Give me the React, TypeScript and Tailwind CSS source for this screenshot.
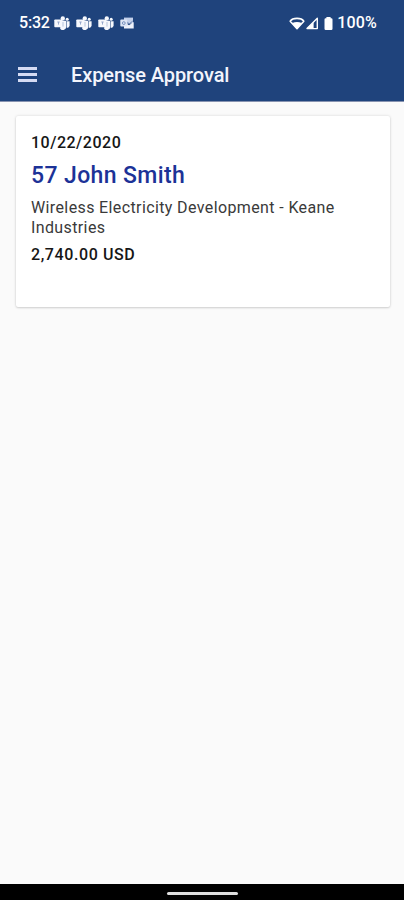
import React from 'react';

interface Expense {
  id: number;
  date: string;
  employee: string;
  project: string;
  amount: string;
}

const expenses: Expense[] = [
  {
    id: 57,
    date: '10/22/2020',
    employee: 'John Smith',
    project: 'Wireless Electricity Development - Keane Industries',
    amount: '2,740.00 USD',
  },
];

const TeamsIcon = () => (
  <svg width="16" height="14" viewBox="0 0 16 14" fill="#f6f8fd">
    <circle cx="8.8" cy="2.4" r="2.2" />
    <circle cx="13.2" cy="3.3" r="1.5" />
    <path d="M7.5 4.8h4.6v5.4a3.3 3.3 0 0 1-6 2.4z" />
    <path d="M12.6 5.3h3v4a2.5 2.5 0 0 1-3 2.4z" />
    <rect x="0.3" y="3.4" width="8.2" height="7.8" rx="0.8" />
    <path d="M3.3 6h2.4M4.5 6v2.6" stroke="#8ea2c8" strokeWidth="0.9" />
    <path d="M9 6v4.6" stroke="#8ea2c8" strokeWidth="0.6" />
  </svg>
);

const OutlookIcon = () => (
  <svg width="14" height="12" viewBox="0 0 14 12">
    <path d="M4 0.6h9v6H4z" fill="#c3d0ea" />
    <path d="M4 5l5 3.2L13.7 5v6.5H4z" fill="#eef2fb" />
    <path d="M6.5 4.5l2.8 2.4 3.4-2.8" stroke="#5b78aa" strokeWidth="0.9" fill="none" />
    <rect x="0.3" y="2.6" width="7" height="7" rx="0.8" fill="#dde5f5" />
    <circle cx="3.8" cy="6.1" r="1.4" stroke="#6d88b8" strokeWidth="0.9" fill="none" />
  </svg>
);

const WifiIcon = () => (
  <svg width="16" height="13" viewBox="0 0 16 13">
    <path d="M1.2 4.2C3.6 0.4 12.4 0.4 14.8 4.2L8 11.6z" fill="none" stroke="#fff" strokeWidth="1.6" strokeLinejoin="round" />
    <path d="M3.4 6c2.6-1.2 6.6-1.2 9.2 0L8 12z" fill="#fff" />
  </svg>
);

const SignalIcon = () => (
  <svg width="14" height="13" viewBox="0 0 14 13">
    <path d="M12.3 1.3v10.3H2z" fill="none" stroke="#fff" strokeWidth="1.4" strokeLinejoin="round" />
    <path d="M8.6 5v6.6H2z" fill="#fff" />
  </svg>
);

const BatteryIcon = () => (
  <svg width="9" height="13" viewBox="0 0 9 13" fill="#fff">
    <path d="M2.4 0h4.2v1.2h.7A1.2 1.2 0 0 1 8.5 2.4v9.4A1.2 1.2 0 0 1 7.3 13H1.7A1.2 1.2 0 0 1 .5 11.8V2.4a1.2 1.2 0 0 1 1.2-1.2h.7z" />
  </svg>
);

const StatusBar = () => (
  <div className="flex h-[46px] items-center justify-between pl-[19px] pr-[27px] text-white">
    <div className="flex items-center">
      <span className="w-[35px] text-base font-medium leading-5 tracking-[-0.2px]">5:32</span>
      <div className="flex items-center gap-[6px]">
        <TeamsIcon />
        <TeamsIcon />
        <TeamsIcon />
        <OutlookIcon />
      </div>
    </div>
    <div className="flex items-center">
      <WifiIcon />
      <SignalIcon />
      <span className="ml-[5px] mr-1"><BatteryIcon /></span>
      <span className="text-base font-medium leading-5 tracking-[0.2px]">100%</span>
    </div>
  </div>
);

const AppBar = () => (
  <div className="flex h-[55px] items-center pl-[18px] pt-[3px]">
    <button className="mb-[2px] flex w-[53px] flex-col gap-[3px]" aria-label="Menu">
      <span className="h-[3px] w-[19px] bg-[#d5dbf3]"></span>
      <span className="h-[3px] w-[19px] bg-[#d5dbf3]"></span>
      <span className="h-[3px] w-[19px] bg-[#d5dbf3]"></span>
    </button>
    <h1 className="text-xl font-medium leading-6 tracking-[-0.08px] text-[#f3f5fc]">Expense Approval</h1>
  </div>
);

const ExpenseCard: React.FC<{ expense: Expense }> = ({ expense }) => (
  <div className="h-[191px] rounded-[2px] bg-white px-[15px] pt-[17px] shadow-[0_0_3px_rgba(0,0,0,0.14),0_1px_2px_rgba(0,0,0,0.12)]">
    <p className="text-base font-medium leading-5 tracking-[0.5px] text-[#161616]">{expense.date}</p>
    <h2 className="mt-[9px] text-[23px] font-medium leading-7 tracking-[0.38px] text-[#1c3297]">
      {expense.id} {expense.employee}
    </h2>
    <p className="mt-2 text-base leading-5 tracking-[0.38px] text-[#3a3a3a]">{expense.project}</p>
    <p className="mt-[7px] text-base font-medium leading-5 tracking-[0.6px] text-[#161616]">{expense.amount}</p>
  </div>
);

const App = () => {
  return (
    <div className="flex h-[900px] w-full flex-col bg-[#fafafa] font-['Roboto',sans-serif]">
      <header className="border-b border-[#8793b0] bg-[#1f437c]">
        <StatusBar />
        <AppBar />
      </header>
      <main className="flex-1 pl-4 pr-[14px] pt-[14px]">
        {expenses.map(expense => (
          <ExpenseCard key={expense.id} expense={expense} />
        ))}
      </main>
      <footer className="flex h-4 items-center justify-center bg-black">
        <div className="mt-[2px] h-[3px] w-[71px] rounded-full bg-[#dedede]"></div>
      </footer>
    </div>
  );
};

export default App;
